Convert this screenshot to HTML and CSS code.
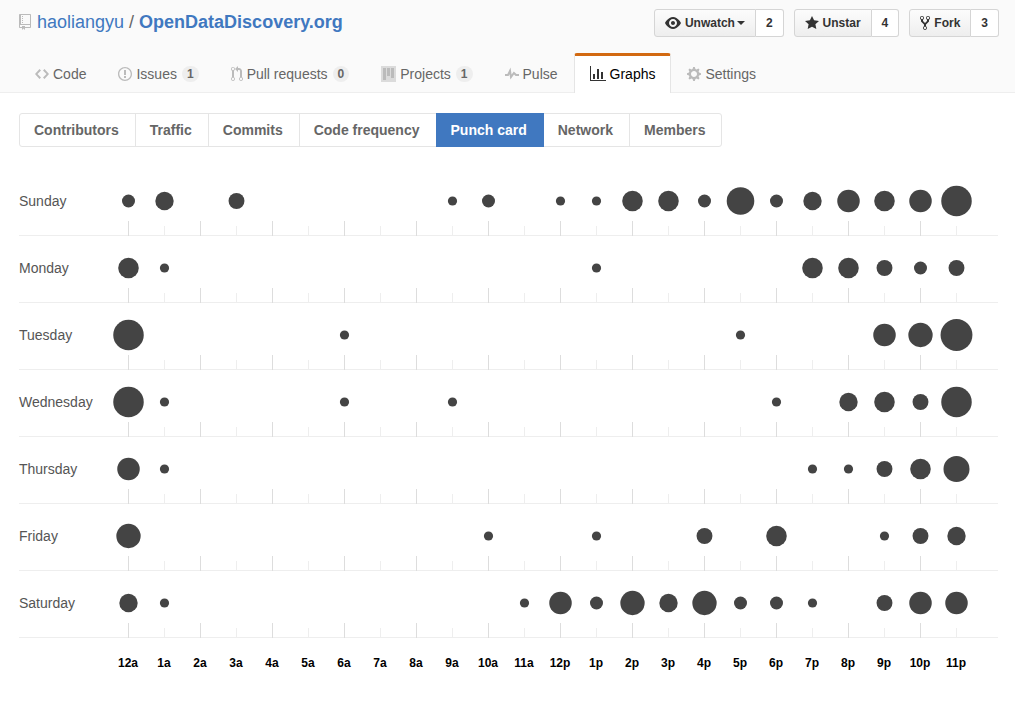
FILE: index.html
```html
<!DOCTYPE html>
<html lang="en">
<head>
<meta charset="utf-8">
<title>Graphs · haoliangyu/OpenDataDiscovery.org</title>
<link rel="stylesheet" href="styles.css">
</head>
<body>
<header class="repohead">
  <div class="repohead-top">
    <h1 class="repo-title">
      <svg class="icon icon-muted" width="12" height="16" viewBox="0 0 12 16" aria-hidden="true"><path d="M4 9H3V8h1v1zm0-3H3v1h1V6zm0-2H3v1h1V4zm0-2H3v1h1V2zm8-1v12c0 .55-.45 1-1 1H6v2l-1.5-1.5L3 16v-2H1c-.55 0-1-.45-1-1V1c0-.55.45-1 1-1h10c.55 0 1 .45 1 1zm-1 10H1v2h2v-1h3v1h5v-2zm0-10H2v9h9V1z"/></svg>
      <a href="#owner">haoliangyu</a>
      <span class="divider">/</span>
      <a class="repo-name" href="#repo">OpenDataDiscovery.org</a>
    </h1>
    <ul class="actions">
      <li class="action">
        <button class="btn" type="button"><svg class="icon" width="16" height="16" viewBox="0 0 16 16" aria-hidden="true"><path d="M8.06 2C3 2 0 8 0 8s3 6 8.06 6C13 14 16 8 16 8s-3-6-7.94-6zM8 12c-2.2 0-4-1.78-4-4 0-2.2 1.8-4 4-4 2.22 0 4 1.8 4 4 0 2.22-1.78 4-4 4zm2-4c0 1.11-.89 2-2 2-1.11 0-2-.89-2-2 0-1.11.89-2 2-2 1.11 0 2 .89 2 2z"/></svg>Unwatch<span class="caret"></span></button>
        <a class="count" href="#watchers">2</a>
      </li>
      <li class="action">
        <button class="btn" type="button"><svg class="icon" width="14" height="16" viewBox="0 0 14 16" aria-hidden="true"><path d="M14 6l-4.9-.64L7 1 4.9 5.36 0 6l3.6 3.26L2.67 14 7 11.67 11.33 14l-.93-4.74L14 6z"/></svg>Unstar</button>
        <a class="count" href="#stargazers">4</a>
      </li>
      <li class="action">
        <button class="btn" type="button"><svg class="icon" width="10" height="16" viewBox="0 0 10 16" aria-hidden="true"><path d="M8 1a1.993 1.993 0 0 0-1 3.72V6L5 8 3 6V4.72A1.993 1.993 0 0 0 2 1a1.993 1.993 0 0 0-1 3.72V6.5l3 3v1.78A1.993 1.993 0 0 0 5 15a1.993 1.993 0 0 0 1-3.72V9.5l3-3V4.72A1.993 1.993 0 0 0 8 1zM2 4.2C1.34 4.2.8 3.65.8 3c0-.65.55-1.2 1.2-1.2.65 0 1.2.55 1.2 1.2 0 .65-.55 1.2-1.2 1.2zm3 10c-.66 0-1.2-.55-1.2-1.2 0-.65.55-1.2 1.2-1.2.65 0 1.2.55 1.2 1.2 0 .65-.55 1.2-1.2 1.2zm3-10c-.66 0-1.2-.55-1.2-1.2 0-.65.55-1.2 1.2-1.2.65 0 1.2.55 1.2 1.2 0 .65-.55 1.2-1.2 1.2z"/></svg>Fork</button>
        <a class="count" href="#forks">3</a>
      </li>
    </ul>
  </div>
  <nav class="tabs" aria-label="Repository">
    <a class="tab" href="#code"><svg class="icon" width="14" height="16" viewBox="0 0 14 16" aria-hidden="true"><path d="M9.5 3L8 4.5 11.5 8 8 11.5 9.5 13 14 8 9.5 3zm-5 0L0 8l4.5 5L6 11.5 2.5 8 6 4.5 4.5 3z"/></svg><span>Code</span></a>
    <a class="tab" href="#issues"><svg class="icon" width="14" height="16" viewBox="0 0 14 16" aria-hidden="true"><path d="M7 2.3c3.14 0 5.7 2.56 5.7 5.7s-2.56 5.7-5.7 5.7A5.71 5.71 0 0 1 1.3 8c0-3.14 2.56-5.7 5.7-5.7zM7 1C3.14 1 0 4.14 0 8s3.14 7 7 7 7-3.14 7-7-3.14-7-7-7zm1 3H6v5h2V4zm0 6H6v2h2v-2z"/></svg><span>Issues</span><span class="counter">1</span></a>
    <a class="tab" href="#pulls"><svg class="icon" width="12" height="16" viewBox="0 0 12 16" aria-hidden="true"><path d="M11 11.28V5c-.03-.78-.34-1.47-.94-2.06C9.46 2.35 8.78 2.03 8 2H7V0L4 3l3 3V4h1c.27.02.48.11.69.31.21.2.3.42.31.69v6.28A1.993 1.993 0 0 0 10 15a1.993 1.993 0 0 0 1-3.72zm-1 2.92c-.66 0-1.2-.55-1.2-1.2 0-.65.55-1.2 1.2-1.2.65 0 1.2.55 1.2 1.2 0 .65-.55 1.2-1.2 1.2zM4 3c0-1.11-.89-2-2-2a1.993 1.993 0 0 0-1 3.72v6.56A1.993 1.993 0 0 0 2 15a1.993 1.993 0 0 0 1-3.72V4.72c.59-.34 1-.98 1-1.72zm-.8 10c0 .66-.55 1.2-1.2 1.2-.65 0-1.2-.55-1.2-1.2 0-.65.55-1.2 1.2-1.2.65 0 1.2.55 1.2 1.2zM2 4.2C1.34 4.2.8 3.65.8 3c0-.65.55-1.2 1.2-1.2.65 0 1.2.55 1.2 1.2 0 .65-.55 1.2-1.2 1.2z"/></svg><span>Pull requests</span><span class="counter">0</span></a>
    <a class="tab" href="#projects"><svg class="icon" width="15" height="16" viewBox="0 0 15 16" aria-hidden="true"><path opacity=".5" d="M0 0h15v16H0z"/><path d="M2 2h3v12H2zM6 2h3v8H6zM10 2h3v10h-3z"/></svg><span>Projects</span><span class="counter">1</span></a>
    <a class="tab" href="#pulse"><svg class="icon" width="14" height="16" viewBox="0 0 14 16" aria-hidden="true"><path d="M11.5 8L8.8 5.4 6.6 8.5 5.5 1.6 2.38 8H0v2h3.6l.9-1.8.9 5.4L9 8.5l1.6 1.5H14V8h-2.5z"/></svg><span>Pulse</span></a>
    <a class="tab selected" href="#graphs" aria-current="page"><svg class="icon" width="16" height="16" viewBox="0 0 16 16" aria-hidden="true"><path d="M16 14v1H0V0h1v14h15zM5 13H3V8h2v5zm4 0H7V3h2v10zm4 0h-2V6h2v7z"/></svg><span>Graphs</span></a>
    <a class="tab" href="#settings"><svg class="icon" width="14" height="16" viewBox="0 0 14 16" aria-hidden="true"><path d="M14 8.77v-1.6l-1.94-.64-.45-1.09.88-1.84-1.13-1.13-1.81.91-1.09-.45-.69-1.92h-1.6l-.63 1.94-1.11.45-1.84-.88-1.13 1.13.91 1.81-.45 1.09L0 7.23v1.59l1.94.64.45 1.09-.88 1.84 1.13 1.13 1.81-.91 1.09.45.69 1.92h1.59l.63-1.94 1.11-.45 1.84.88 1.13-1.13-.92-1.81.47-1.09L14 8.75v.02zM7 11c-1.66 0-3-1.34-3-3s1.34-3 3-3 3 1.34 3 3-1.34 3-3 3z"/></svg><span>Settings</span></a>
  </nav>
</header>
<main class="content">
  <nav class="subnav" aria-label="Graphs">
    <a class="subnav-item" href="#contributors">Contributors</a>
    <a class="subnav-item" href="#traffic">Traffic</a>
    <a class="subnav-item" href="#commits">Commits</a>
    <a class="subnav-item" href="#code-frequency">Code frequency</a>
    <a class="subnav-item selected" href="#punch-card" aria-current="page">Punch card</a>
    <a class="subnav-item" href="#network">Network</a>
    <a class="subnav-item" href="#members">Members</a>
  </nav>
  <table class="punchcard" aria-label="Commits by day and hour">
    <colgroup><col class="col-day"><col span="24"><col class="col-end"></colgroup>
    <tbody id="days"></tbody>
    <tfoot><tr id="hours"></tr></tfoot>
  </table>
</main>
<script src="punchcard.js"></script>
</body>
</html>
```
FILE: styles.css
```css
* { box-sizing: border-box; }

body {
  margin: 0;
  background: #fff;
  color: #333;
  font: 14px/20px "Liberation Sans", Arial, sans-serif;
}

a { color: #4078c0; text-decoration: none; }

.icon { display: block; flex: none; fill: currentColor; }
.icon-muted { color: #bbb; }

.repohead {
  display: flex;
  flex-direction: column;
  gap: 16px;
  padding: 9px 16px 0 19px;
  background: #fafafa;
  border-bottom: 1px solid #eee;
}

.repohead-top {
  display: flex;
  justify-content: space-between;
  align-items: flex-start;
}

.repo-title {
  display: flex;
  align-items: center;
  gap: 6px;
  margin: 0;
  font-size: 18px;
  line-height: 26px;
  font-weight: normal;
}
.divider { color: #666; margin: 0 -1px; }
.repo-name { font-weight: bold; }

.actions {
  display: flex;
  gap: 10px;
  margin: 0;
  padding: 0;
  list-style: none;
}
.action {
  display: flex;
  font-size: 12px;
  font-weight: bold;
}
.btn, .count {
  display: flex;
  align-items: center;
  height: 28px;
  border: 1px solid #d5d5d5;
  font: inherit;
  line-height: 20px;
  color: #333;
}
.btn {
  gap: 4px;
  padding: 0 10px;
  border-radius: 3px 0 0 3px;
  background: linear-gradient(#fcfcfc, #eee);
}
.count {
  padding: 0 10px;
  border-left: 0;
  border-radius: 0 3px 3px 0;
  background: #fff;
}
.caret {
  margin-left: -2px;
  border: 4px solid transparent;
  border-top-color: currentColor;
  border-bottom: 0;
}

.tabs { display: flex; margin-bottom: -1px; }
.tab {
  display: flex;
  align-items: center;
  gap: 4px;
  height: 40px;
  padding: 0 15px 2px;
  border: 1px solid transparent;
  border-top: 3px solid transparent;
  border-bottom: 0;
  border-radius: 3px 3px 0 0;
  color: #666;
  white-space: nowrap;
}
.tab .icon { color: #bbb; }
.tab.selected {
  border-color: #d26911 #e5e5e5 transparent;
  background: #fff;
  color: #000;
}
.tab.selected .icon { color: #333; }
.counter {
  margin-left: 1px;
  padding: 2px 5px;
  border-radius: 20px;
  background: #eee;
  font-size: 12px;
  line-height: 12px;
  font-weight: bold;
}

.content { padding: 20px 17px 20px 19px; }

.subnav { display: flex; margin-bottom: 22px; }
.subnav-item {
  padding: 6px 16px 6px 14px;
  border: 1px solid #e5e5e5;
  color: #666;
  font-weight: bold;
  white-space: nowrap;
}
.subnav-item + .subnav-item { margin-left: -1px; }
.subnav-item:first-child { border-radius: 3px 0 0 3px; }
.subnav-item:last-child { border-radius: 0 3px 3px 0; }
.subnav-item.selected {
  z-index: 1;
  border-color: #4078c0;
  background: #4078c0;
  color: #fff;
}

.punchcard {
  width: 100%;
  table-layout: fixed;
  border-collapse: separate;
  border-spacing: 0;
}
.col-day { width: 91px; }
.col-end { width: 24px; }

.punchcard th, .punchcard td { padding: 0; }
.punchcard .day th, .day td {
  height: 67px;
  vertical-align: top;
  background: linear-gradient(#eee, #eee) bottom / 100% 1px no-repeat;
}
.punchcard .day th {
  padding-top: 22px;
  color: #555;
  font-weight: normal;
  text-align: left;
}
.punchcard .tick {
  padding-top: 15px;
  background:
    linear-gradient(#ddd, #ddd) center bottom / 1px 15px no-repeat,
    linear-gradient(#eee, #eee) bottom / 100% 1px no-repeat;
}
.punchcard .tick-minor {
  background:
    linear-gradient(#eee, #eee) center bottom / 1px 10px no-repeat,
    linear-gradient(#eee, #eee) bottom / 100% 1px no-repeat;
}
.dot { display: block; margin: 0 auto; fill: #444; }
.hour {
  height: 50px;
  color: #000;
  font-size: 12px;
  line-height: 20px;
  text-align: center;
}
```
FILE: punchcard.js
```js
// Commits per hour, from 12a to 11p.
const commits = {
  Sunday:    [2,4,0,3,0,0,0,0,0,1,2,0,1,1,5,5,2,9,2,4,6,5,6,11],
  Monday:    [5,1,0,0,0,0,0,0,0,0,0,0,0,1,0,0,0,0,0,5,5,3,2,3],
  Tuesday:   [11,0,0,0,0,0,1,0,0,0,0,0,0,0,0,0,0,1,0,0,0,6,7,12],
  Wednesday: [11,1,0,0,0,0,1,0,0,1,0,0,0,0,0,0,0,0,1,0,4,5,3,11],
  Thursday:  [6,1,0,0,0,0,0,0,0,0,0,0,0,0,0,0,0,0,0,1,1,3,5,8],
  Friday:    [7,0,0,0,0,0,0,0,0,0,1,0,0,1,0,0,3,0,5,0,0,1,3,4],
  Saturday:  [4,1,0,0,0,0,0,0,0,0,0,1,6,2,7,4,7,2,2,1,0,3,6,6]
};

// The area of a dot is proportional to its number of commits.
const dot = n => n
  ? `<svg class="dot" width="33" height="34" viewBox="0 0 33 34" role="img" aria-label="${n}"><circle cx="16.5" cy="17" r="${4.6 * Math.sqrt(n)}"/></svg>`
  : '';

document.getElementById('days').innerHTML = Object.entries(commits).map(([day, counts]) =>
  `<tr class="day"><th scope="row">${day}</th>` +
  counts.map((n, h) => `<td class="tick${h % 2 ? ' tick-minor' : ''}">${dot(n)}</td>`).join('') +
  '<td></td></tr>'
).join('');

document.getElementById('hours').innerHTML = '<td></td>' +
  Array.from({ length: 24 }, (_, h) =>
    `<th class="hour" scope="col">${h % 12 || 12}${h < 12 ? 'a' : 'p'}</th>`
  ).join('') + '<td></td>';
```
